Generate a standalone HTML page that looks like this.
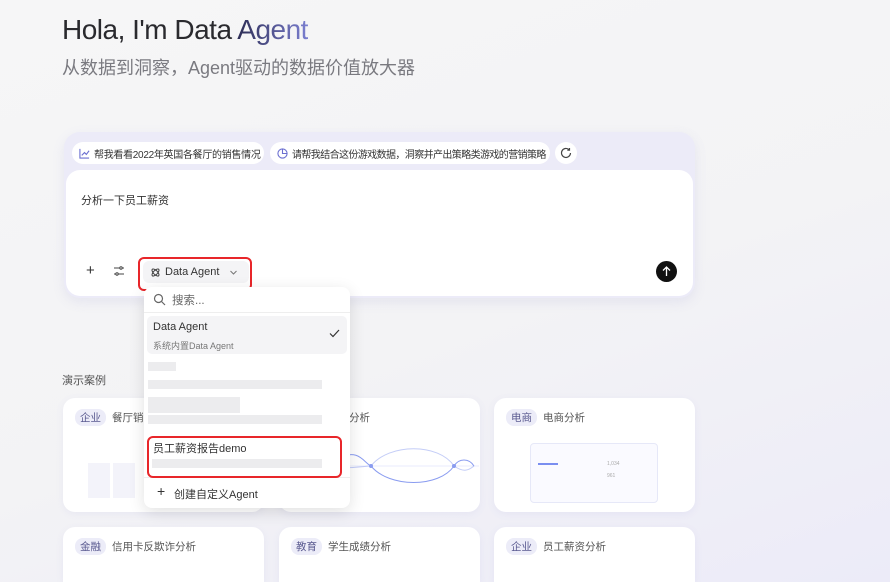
<!DOCTYPE html>
<html><head><meta charset="utf-8"><style>
*{box-sizing:border-box;margin:0;padding:0}
html,body{width:890px;height:582px;overflow:hidden}
body{position:relative;font-family:"Liberation Sans","Noto Sans CJK SC",sans-serif;background:linear-gradient(160deg,#f6f6f7 0%,#f3f3f5 55%,#ecebf8 100%)}
.abs{position:absolute}
h1{position:absolute;left:62px;top:14px;font-size:28px;font-weight:400;color:#2a2a2e;letter-spacing:-0.5px}
h1 span{background:linear-gradient(90deg,#2d2d55,#7b7fd0);-webkit-background-clip:text;color:transparent}
.sub{left:62px;top:54px;font-size:18px;color:#7a7a80}
.wrap{left:64px;top:132px;width:631px;height:166px;background:#ecebf8;border-radius:16px;box-shadow:0 4px 12px rgba(120,120,200,.12)}
.chip{position:absolute;top:142px;height:22px;background:#fff;border-radius:11px;font-size:10px;letter-spacing:-0.3px;white-space:nowrap;color:#333;display:flex;align-items:center;padding:0 7px;gap:4px;overflow:hidden}
.chip svg{flex-shrink:0}
.inner{left:66px;top:170px;width:627px;height:126px;background:#fff;border-radius:14px}
.card{position:absolute;width:201px;height:114px;background:#fff;border-radius:12px;box-shadow:0 2px 8px rgba(120,120,200,.08)}
.tag{position:absolute;left:12px;top:11px;font-size:10.5px;color:#555;display:flex;gap:6px;align-items:center}
.tag b{font-weight:400;background:#ececf8;color:#5a5a90;border-radius:8px;padding:1px 5px}
.dd{left:144px;top:287px;width:206px;height:221px;background:#fff;border-radius:8px;box-shadow:0 4px 16px rgba(0,0,0,.12)}
.blur{position:absolute;background:#ececee;height:9px}
</style></head><body>
<h1>Hola, I'm Data <span>Agent</span></h1>
<div class="abs sub">从数据到洞察，Agent驱动的数据价值放大器</div>
<div class="abs wrap"></div>
<div class="chip" style="left:72px;width:192px"><svg width="11" height="11" viewBox="0 0 12 12" fill="none" stroke="#6b6fd0" stroke-width="1.2"><path d="M1 1v10h10M3 8l3-3 2 2 3-4"/></svg>帮我看看2022年英国各餐厅的销售情况</div>
<div class="chip" style="left:270px;width:280px;letter-spacing:-0.6px"><svg width="11" height="11" viewBox="0 0 12 12" fill="none" stroke="#6b6fd0" stroke-width="1.2"><circle cx="6" cy="6" r="5"/><path d="M6 1v5h5"/></svg>请帮我结合这份游戏数据，洞察并产出策略类游戏的营销策略</div>
<div class="chip" style="left:555px;width:22px;padding:0;justify-content:center"><svg width="12" height="12" viewBox="0 0 12 12" fill="none" stroke="#444" stroke-width="1.2"><path d="M10.5 6A4.5 4.5 0 1 1 9 2.6M9.5 1v2.2H7.3"/></svg></div>
<div class="abs inner"></div>
<div class="abs" style="left:81px;top:192px;font-size:11px;color:#333">分析一下员工薪资</div>
<div class="abs" style="left:86px;top:264px;font-size:15px;color:#333;line-height:14px">+</div>
<svg class="abs" style="left:113px;top:265px" width="12" height="12" viewBox="0 0 12 12" fill="none" stroke="#444" stroke-width="1"><path d="M1 3h6M9 3h2M1 9h2M5 9h6"/><circle cx="8" cy="3" r="1.2"/><circle cx="4" cy="9" r="1.2"/></svg>
<div class="abs" style="left:138px;top:257px;width:114px;height:34px;border:2px solid #e8262a;border-radius:6px"></div>
<div class="abs" style="left:143px;top:261px;width:106px;height:22px;background:#f4f4f6;border-radius:6px;font-size:11px;color:#333;display:flex;align-items:center;padding-left:7px;gap:4px"><svg width="11" height="11" viewBox="0 0 12 12" fill="none" stroke="#333" stroke-width="1"><ellipse cx="6" cy="6" rx="5" ry="2.2" transform="rotate(45 6 6)"/><ellipse cx="6" cy="6" rx="5" ry="2.2" transform="rotate(-45 6 6)"/></svg>Data Agent<svg style="margin-left:6px" width="9" height="9" viewBox="0 0 9 9" fill="none" stroke="#777" stroke-width="1"><path d="M1.5 3l3 3 3-3"/></svg></div>
<div class="abs" style="left:656px;top:261px;width:21px;height:21px;border-radius:50%;background:#111"><svg width="21" height="21" viewBox="0 0 21 21" fill="none" stroke="#fff" stroke-width="1.3"><path d="M10.5 15V6M7 9.5l3.5-3.5 3.5 3.5"/></svg></div>

<div class="abs" style="left:62px;top:372px;font-size:11px;color:#555">演示案例</div>
<div class="card" style="left:63px;top:398px"><div class="tag"><b>企业</b>餐厅销售分析</div>
<div class="abs" style="left:25px;top:65px;width:22px;height:35px;background:#f3f3fa"></div><div class="abs" style="left:50px;top:65px;width:22px;height:35px;background:#f3f3fa"></div></div>
<div class="card" style="left:279px;top:398px"><div class="tag"><b>游戏</b>游戏分析</div>
<svg class="abs" style="left:60px;top:40px" width="140" height="60" fill="none" stroke="#8a9cf0" stroke-width="1"><path d="M0 20C20 10 25 25 32 28C50 50 100 50 115 28C120 20 130 20 135 28"/><path d="M0 30C20 30 25 28 32 28C50 5 100 5 115 28C125 35 130 32 135 28" opacity=".5"/><path d="M0 28H140" opacity=".2"/><circle cx="32" cy="28" r="1.5" fill="#8a9cf0"/><circle cx="115" cy="28" r="1.5" fill="#8a9cf0"/></svg></div>
<div class="card" style="left:494px;top:398px"><div class="tag"><b>电商</b>电商分析</div>
<div class="abs" style="left:36px;top:45px;width:128px;height:60px;border:1px solid #e6e8f8;border-radius:4px;background:#fafaff"></div>
<div class="abs" style="left:44px;top:65px;width:20px;height:2px;background:#7a8ef0"></div>
<div class="abs" style="left:113px;top:63px;font-size:5px;color:#aaa">1,034</div><div class="abs" style="left:113px;top:75px;font-size:5px;color:#aaa">961</div></div>
<div class="card" style="left:63px;top:527px;height:55px;border-radius:12px 12px 0 0"><div class="tag"><b>金融</b>信用卡反欺诈分析</div></div>
<div class="card" style="left:279px;top:527px;height:55px;border-radius:12px 12px 0 0"><div class="tag"><b>教育</b>学生成绩分析</div></div>
<div class="card" style="left:494px;top:527px;height:55px;border-radius:12px 12px 0 0"><div class="tag"><b>企业</b>员工薪资分析</div></div>

<div class="abs dd">
<svg class="abs" style="left:9px;top:6px" width="13" height="13" viewBox="0 0 13 13" fill="none" stroke="#666" stroke-width="1.2"><circle cx="5.5" cy="5.5" r="4"/><path d="M8.5 8.5l3.5 3.5"/></svg>
<div class="abs" style="left:28px;top:5px;font-size:11.5px;color:#666">搜索...</div>
<div class="abs" style="left:0;top:25px;width:206px;height:1px;background:#eee"></div>
<div class="abs" style="left:3px;top:29px;width:200px;height:38px;background:#f4f4f6;border-radius:5px"></div>
<div class="abs" style="left:9px;top:34px;font-size:11px;color:#333">Data Agent</div>
<div class="abs" style="left:9px;top:52px;font-size:9px;color:#777">系统内置Data Agent</div>
<svg class="abs" style="left:185px;top:42px" width="11" height="9" viewBox="0 0 11 9" fill="none" stroke="#333" stroke-width="1.2"><path d="M1 4.5l3 3L10 1"/></svg>
<div class="blur" style="left:4px;top:75px;width:28px"></div>
<div class="blur" style="left:4px;top:93px;width:174px"></div>
<div class="blur" style="left:4px;top:110px;width:92px;height:16px"></div>
<div class="blur" style="left:4px;top:128px;width:174px"></div>
<div class="abs" style="left:9px;top:153px;font-size:11px;color:#333">员工薪资报告demo</div>
<div class="blur" style="left:8px;top:172px;width:170px"></div>
<div class="abs" style="left:0;top:190px;width:206px;height:1px;background:#eee"></div>
<div class="abs" style="left:13px;top:197px;font-size:14px;color:#333;line-height:14px">+</div>
<div class="abs" style="left:30px;top:199px;font-size:11px;color:#333">创建自定义Agent</div>
</div>
<div class="abs" style="left:147px;top:436px;width:195px;height:42px;border:2px solid #e8262a;border-radius:6px"></div>
</body></html>
